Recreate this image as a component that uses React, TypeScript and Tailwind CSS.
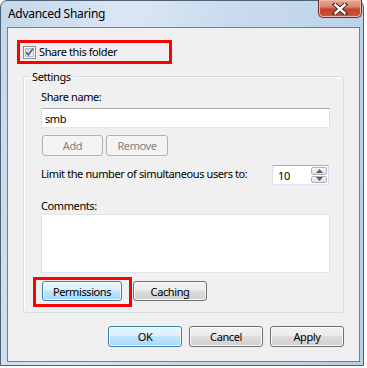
import React from 'react';

type BtnKind = 'normal' | 'blue' | 'disabled';

const btnKinds: Record<BtnKind, string> = {
    normal: 'border-[#707070] text-black bg-[linear-gradient(to_bottom,#f2f2f2_0%,#ebebeb_45%,#dddddd_50%,#cfcfcf_100%)] shadow-[inset_0_0_0_1px_#fbfbfb]',
    blue: 'border-[#3c7fb1] text-black bg-[linear-gradient(to_bottom,#eaf6fd_0%,#d9f0fc_45%,#bee6fd_50%,#a7d9f5_100%)] shadow-[inset_0_0_0_1px_#f4fbfe]',
    disabled: 'border-[#adb2b5] text-[#838383] bg-[#f4f4f4]',
};

function WinButton({ children, kind = 'normal', className = '' }: { children: React.ReactNode; kind?: BtnKind; className?: string }) {
    return (
        <div className={`flex items-center justify-center rounded-[3px] border leading-none ${btnKinds[kind]} ${className}`}>
            {children}
        </div>
    );
}

function CloseButton() {
    return (
        <div className="-mr-[2px] -mt-[1px] flex h-[18px] w-[44px] items-center justify-center rounded-b-[5px] border border-t-0 border-[#6b2e24] bg-[linear-gradient(to_bottom,#e9a897_0%,#d98672_40%,#c2432a_55%,#d0553a_100%)] shadow-[inset_0_0_0_1px_#f0b8a8]">
            <svg width="16" height="12" viewBox="0 0 16 12">
                <path d="M3 1.5 L13 10.5 M13 1.5 L3 10.5" stroke="#3a1a14" strokeWidth="4.2" strokeLinecap="square" />
                <path d="M3.3 1.8 L12.7 10.2 M12.7 1.8 L3.3 10.2" stroke="#ffffff" strokeWidth="2.4" strokeLinecap="square" />
            </svg>
        </div>
    );
}

function Checkbox() {
    return (
        <svg width="13" height="13" viewBox="0 0 13 13">
            <defs>
                <linearGradient id="cbg" x1="0" y1="0" x2="1" y2="1">
                    <stop offset="0" stopColor="#cbcfd5" />
                    <stop offset="1" stopColor="#f6f6f6" />
                </linearGradient>
            </defs>
            <rect x="0.5" y="0.5" width="12" height="12" fill="#f4f4f4" stroke="#8e8f8f" />
            <rect x="2.5" y="2.5" width="8" height="8" fill="url(#cbg)" stroke="#b9bdc3" />
            <path d="M3.2 6.3 L5.3 9 L10 2.6" stroke="#4a5a8c" strokeWidth="1.6" fill="none" />
        </svg>
    );
}

function Spinner() {
    return (
        <div className="flex h-[20px] w-[57px] border border-[#abadb3] border-b-[#e3e9ef] border-l-[#dbdfe6] border-r-[#dbdfe6] bg-white">
            <div className="flex flex-1 items-center pl-[5px] leading-none">10</div>
            <div className="flex w-[17px] flex-col gap-px pr-px py-px">
                <div className="flex flex-1 items-center justify-center rounded-[2px] border border-[#b0b4ba] bg-[linear-gradient(to_bottom,#f6f6f6,#dedede)]">
                    <svg width="7" height="4" viewBox="0 0 7 4"><path d="M0 4 L3.5 0 L7 4 Z" fill="#4d6185" /></svg>
                </div>
                <div className="flex flex-1 items-center justify-center rounded-[2px] border border-[#b0b4ba] bg-[linear-gradient(to_bottom,#f6f6f6,#dedede)]">
                    <svg width="7" height="4" viewBox="0 0 7 4"><path d="M0 0 L7 0 L3.5 4 Z" fill="#4d6185" /></svg>
                </div>
            </div>
        </div>
    );
}

export default function App() {
    return (
        <div className="h-[368px] w-[367px] bg-white font-['Noto_Sans',sans-serif] text-[11px] tracking-[-0.4px] text-black">
            {/* Window frame */}
            <div className="flex h-[366px] w-[364px] flex-col rounded-t-[7px] border border-[#4f6275] bg-[linear-gradient(100deg,#c4d7ec_0%,#dbe7f4_30%,#c9dbee_55%,#b7cee6_100%)] pb-[3px] pl-[6px] pr-[3px]">
                {/* Title bar */}
                <div className="flex h-[26px] items-start justify-between">
                    <span className="ml-px mt-[5px] text-[12px] leading-[16px] tracking-[-0.3px]">Advanced Sharing</span>
                    <CloseButton />
                </div>

                {/* Client area */}
                <div className="flex flex-1 flex-col border border-[#6e8196] bg-[#f0f0f0]">
                    {/* Share this folder (highlighted) */}
                    <div className="ml-[9px] mt-[12px] flex h-[24px] w-[155px] items-center border-[3px] border-[#ff0000] pl-[3px]">
                        <Checkbox />
                        <span className="ml-[3px] leading-[16px]">Share this folder</span>
                    </div>

                    {/* Settings group */}
                    <div className="relative ml-[15px] mt-[12px] flex h-[237px] w-[321px] flex-col rounded-[3px] border border-[#d5dfe5] pl-[17px] pr-[13px] shadow-[inset_1px_1px_0_#ffffff]">
                        <span className="absolute -top-[8px] left-[6px] bg-[#f0f0f0] px-[2px] leading-[16px]">Settings</span>

                        <div className="mt-[12px] h-[16px] leading-[16px]">Share name:</div>
                        <div className="mt-[3px] flex h-[20px] w-[289px] items-center border border-[#abadb3] border-b-[#e3e9ef] border-l-[#dbdfe6] border-r-[#dbdfe6] bg-white pl-[3px] leading-none">
                            smb
                        </div>

                        <div className="ml-px mt-[7px] flex gap-[3px]">
                            <WinButton kind="disabled" className="h-[21px] w-[61px]">Add</WinButton>
                            <WinButton kind="disabled" className="h-[21px] w-[62px]">Remove</WinButton>
                        </div>

                        <div className="mt-[9px] flex w-[288px] items-start justify-between">
                            <span className="mt-px whitespace-nowrap leading-[16px]">Limit the number of simultaneous users to:</span>
                            <Spinner />
                        </div>

                        <div className="mt-[14px] h-[14px] leading-[14px]">Comments:</div>
                        <div className="mt-px h-[59px] w-[289px] border border-[#dfe3e8] bg-white" />

                        <div className="ml-px mt-[8px] flex">
                            <div className="relative">
                                <WinButton kind="blue" className="h-[20px] w-[80px]">Permissions</WinButton>
                                <div className="absolute -left-[9px] -top-[4px] h-[30px] w-[99px] border-[3px] border-[#ff0000]" />
                            </div>
                            <WinButton className="ml-[11px] h-[20px] w-[74px]">Caching</WinButton>
                        </div>
                    </div>

                    {/* Dialog buttons */}
                    <div className="ml-[15px] mt-[13px] flex w-[321px] justify-end gap-[7px]">
                        <WinButton kind="blue" className="h-[21px] w-[74px]">OK</WinButton>
                        <WinButton className="h-[21px] w-[74px]">Cancel</WinButton>
                        <WinButton className="h-[21px] w-[74px]">Apply</WinButton>
                    </div>
                </div>
            </div>
        </div>
    );
}
